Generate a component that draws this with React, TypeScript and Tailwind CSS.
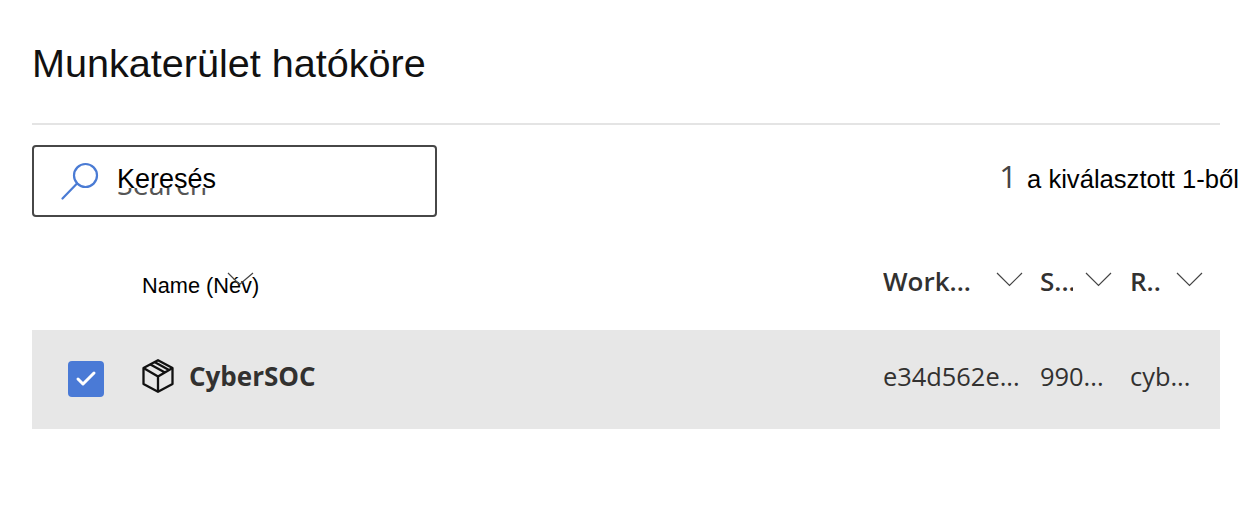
import { Check } from 'lucide-react';

const columns = [
  { label: 'Work...', width: 'w-[113px]' },
  { label: 'S...', width: 'w-[33px] mr-3' },
  { label: 'R..', width: 'w-[46px]' },
];

const rowGrid = 'grid grid-cols-[110px_741px_157px_90px_90px]';

function SearchIcon() {
  return (
    <svg width="38" height="38" viewBox="0 0 38 38" fill="none" stroke="#4a7bd4" strokeWidth="2.2">
      <circle cx="24.5" cy="13.5" r="11.5" />
      <path d="M16 21.5 1.5 36.5" strokeLinecap="round" />
    </svg>
  );
}

function BoxIcon() {
  return (
    <svg className="-mt-[7px]" width="32" height="34" viewBox="0 0 32 34" fill="none" stroke="#111" strokeWidth="2.3" strokeLinejoin="round">
      <path d="M16 1.2 30.5 9v16L16 32.8 1.5 25V9z" />
      <path d="M1.5 9 16 17.5 30.5 9M16 17.5v15.3M8 5.2l14.5 8M12.5 3l14.5 8" />
    </svg>
  );
}

function Chevron() {
  return (
    <svg className="shrink-0 -mt-1" width="27" height="15" viewBox="0 0 27 15" fill="none" stroke="#444" strokeWidth="1.2">
      <path d="M1 1l12.5 12.5L26 1" />
    </svg>
  );
}

export default function App() {
  return (
    <div className="w-[1257px] h-[521px] overflow-hidden bg-white pl-8 pr-[37px] font-['Liberation_Sans',sans-serif]">
      <h1 className="h-[125px] pt-[38px] text-[39.6px] leading-[50px] text-[#111] border-b-2 border-[#e4e4e4]">
        Munkaterület hatóköre
      </h1>

      <div className="flex items-center justify-between mt-5">
        <div className="relative flex items-center w-[405px] h-[72px] rounded-[4px] border-2 border-[#474747] pl-[27px]">
          <SearchIcon />
          <div className="relative ml-[18px] -mt-1 text-[27px] leading-8 text-black">
            <span className="absolute left-0 top-0 text-[#555] font-['Open_Sans',sans-serif] text-[28.5px] leading-[42px] [clip-path:inset(25px_0_0_0)]">Search</span>
            <span className="relative">Keresés</span>
          </div>
        </div>
        <div className="flex items-baseline -mr-[19px] -mt-[10px] text-black">
          <span className="text-[31px] leading-10 text-[#444] font-['Open_Sans',sans-serif] mr-[10px]">1</span>
          <span className="text-[25.6px] leading-8">a kiválasztott 1-ből</span>
        </div>
      </div>

      <div className={`${rowGrid} h-[113px] items-center`}>
        <div />
        <div className="relative text-[21.75px] text-black pt-[24px] leading-7">
          <span>Name (Név)</span>
          <svg className="absolute left-[85px] top-[24px]" width="30" height="16" viewBox="0 0 30 16" fill="none" stroke="#444" strokeWidth="1.2">
            <path d="M1 1l11.5 11.5M12.5 12.5 26 1" />
          </svg>
        </div>
        {columns.map((c) => (
          <div key={c.label} className="flex items-center pt-[16px] font-['Open_Sans',sans-serif] font-semibold text-[26px] text-[#323130]">
            <span className={`${c.width} whitespace-nowrap overflow-hidden`}>{c.label}</span>
            <Chevron />
          </div>
        ))}
      </div>

      <div className={`${rowGrid} h-[99px] items-center bg-[#e7e7e7] font-['Open_Sans',sans-serif] text-[#323130]`}>
        <div className="pl-9">
          <div className="flex items-center justify-center w-9 h-9 -mt-[2px] rounded-[4px] bg-[#4a7ad6]">
            <Check className="w-6 h-6 text-white" strokeWidth={3} />
          </div>
        </div>
        <div className="flex items-center gap-[15px]">
          <BoxIcon />
          <span className="text-[26px] font-bold -mt-[7px]">CyberSOC</span>
        </div>
        <div className="text-[25.4px] -mt-[7px]">e34d562e...</div>
        <div className="text-[25.4px] -mt-[7px]">990...</div>
        <div className="text-[25.4px] -mt-[7px]">cyb...</div>
      </div>
    </div>
  );
}
